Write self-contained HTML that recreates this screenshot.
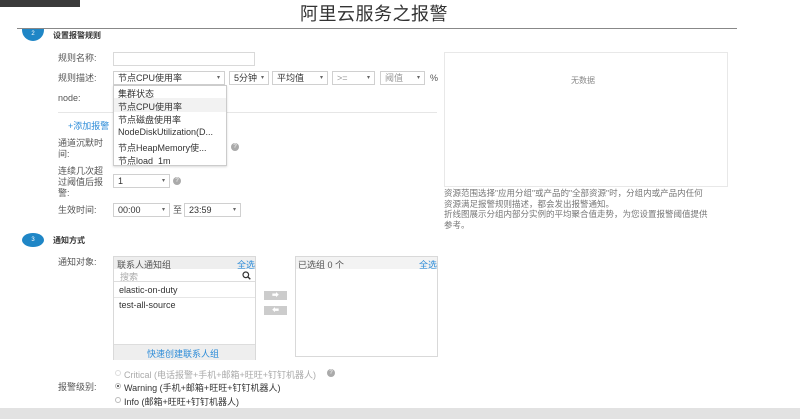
<!DOCTYPE html>
<html><head><meta charset="utf-8"><style>
*{margin:0;padding:0;box-sizing:border-box}
body{width:800px;height:419px;overflow:hidden;background:#fff;position:relative;font-family:"Liberation Sans","Noto Sans CJK SC",sans-serif;color:#333;font-size:9px}
.a{position:absolute;white-space:nowrap}
.box{position:absolute;border:1px solid #d9d9d9;background:#fff}
.lbl{position:absolute;color:#555;font-size:9px;line-height:11px}
.sel{position:absolute;border:1px solid #d0d0d0;background:#fff;height:14px;font-size:9px;line-height:12px;padding-left:4px;color:#333}
.sel:after{content:"▾";position:absolute;right:4px;top:0;font-size:6px;color:#666}
.q{position:absolute;width:8px;height:8px;border-radius:50%;background:#aaa;color:#fff;font-size:6px;line-height:8px;text-align:center}
.circ{position:absolute;width:22px;height:14px;border-radius:50%;background:#1f86c6;color:#fff;font-size:6px;text-align:center;line-height:14px}
.blue{color:#2d8cd8}
</style></head><body>
<div class="a" style="left:0;top:0;width:80px;height:7px;background:#3a3a3a"></div>
<div class="a" style="left:300px;top:0px;font-size:18px;color:#333;letter-spacing:0.5px">阿里云服务之报警</div>
<div class="a" style="left:17px;top:28px;width:720px;height:1px;background:#888"></div>
<div class="circ" style="left:22px;top:29px;border-radius:0 0 11px 11px;height:12px;line-height:10px">2</div>
<div class="a" style="left:53px;top:30px;font-size:8px;font-weight:bold;color:#333">设置报警规则</div>

<div class="lbl" style="left:58px;top:53px">规则名称:</div>
<div class="box" style="left:113px;top:52px;width:142px;height:14px"></div>
<div class="lbl" style="left:58px;top:73px">规则描述:</div>
<div class="sel" style="left:113px;top:71px;width:112px">节点CPU使用率</div>
<div class="sel" style="left:229px;top:71px;width:40px">5分钟</div>
<div class="sel" style="left:272px;top:71px;width:56px">平均值</div>
<div class="sel" style="left:332px;top:71px;width:43px;color:#999">&gt;=</div>
<div class="sel" style="left:380px;top:71px;width:45px;color:#999">阈值</div>
<div class="lbl" style="left:430px;top:73px">%</div>
<div class="lbl" style="left:58px;top:93px">node:</div>
<div class="a" style="left:58px;top:112px;width:379px;height:1px;background:#e6e6e6"></div>
<div class="a blue" style="left:68px;top:119px;font-size:9px">+添加报警</div>
<div class="lbl" style="left:58px;top:138px">通道沉默时<br>间:</div>
<div class="q" style="left:231px;top:143px">?</div>
<div class="lbl" style="left:58px;top:166px">连续几次超<br>过阈值后报<br>警:</div>
<div class="sel" style="left:113px;top:174px;width:57px">1</div>
<div class="q" style="left:173px;top:177px">?</div>
<div class="lbl" style="left:58px;top:205px">生效时间:</div>
<div class="sel" style="left:113px;top:203px;width:57px">00:00</div>
<div class="lbl" style="left:173px;top:205px">至</div>
<div class="sel" style="left:184px;top:203px;width:57px">23:59</div>

<div class="box" style="left:113px;top:85px;width:114px;height:81px;border-color:#ccc;box-shadow:0 1px 2px rgba(0,0,0,.15);overflow:hidden">
<div class="a" style="left:4px;top:1px">集群状态</div>
<div class="a" style="left:0;top:12px;width:112px;height:14px;background:#f2f2f2"></div>
<div class="a" style="left:4px;top:14px">节点CPU使用率</div>
<div class="a" style="left:4px;top:27px">节点磁盘使用率</div>
<div class="a" style="left:4px;top:41px">NodeDiskUtilization(D...</div>
<div class="a" style="left:4px;top:55px">节点HeapMemory使...</div>
<div class="a" style="left:4px;top:68px">节点load_1m</div>
</div>

<div class="box" style="left:444px;top:52px;width:284px;height:135px;border-color:#e8e8e8"></div>
<div class="a" style="left:571px;top:75px;color:#888;font-size:8px">无数据</div>
<div class="a" style="left:444px;top:188px;color:#777;font-size:8.5px;line-height:10.5px">资源范围选择"应用分组"或产品的"全部资源"时，分组内或产品内任何<br>资源满足报警规则描述，都会发出报警通知。<br>折线图展示分组内部分实例的平均聚合值走势，为您设置报警阈值提供<br>参考。</div>

<div class="circ" style="left:22px;top:233px">3</div>
<div class="a" style="left:53px;top:235px;font-size:8px;font-weight:bold">通知方式</div>
<div class="lbl" style="left:58px;top:257px">通知对象:</div>
<div class="box" style="left:113px;top:256px;width:143px;height:104px">
<div class="a" style="left:0;top:0;width:141px;height:12px;background:#eee"></div>
<div class="a" style="left:3px;top:1px;color:#555">联系人通知组</div>
<div class="a blue" style="left:123px;top:1px">全选</div>
<div class="a" style="left:0;top:12px;width:141px;height:13px;border-bottom:1px solid #ddd"></div>
<div class="a" style="left:6px;top:13px;color:#aaa">搜索</div>
<svg class="a" style="left:128px;top:14px" width="9" height="9" viewBox="0 0 9 9"><circle cx="3.8" cy="3.8" r="2.8" fill="none" stroke="#333" stroke-width="1.2"/><path d="M5.8 5.8L8.3 8.3" stroke="#333" stroke-width="1.4"/></svg>
<div class="a" style="left:5px;top:28px">elastic-on-duty</div>
<div class="a" style="left:0;top:40px;width:141px;height:1px;background:#e6e6e6"></div>
<div class="a" style="left:5px;top:43px">test-all-source</div>
<div class="a" style="left:0;top:87px;width:141px;height:16px;background:#eee;border-top:1px solid #ddd"></div>
<div class="a blue" style="left:33px;top:90px">快速创建联系人组</div>
</div>
<div class="a" style="left:264px;top:291px;width:23px;height:9px;background:#ccc;color:#fff;font-size:7px;text-align:center;line-height:9px">➡</div>
<div class="a" style="left:264px;top:306px;width:23px;height:9px;background:#ccc;color:#fff;font-size:7px;text-align:center;line-height:9px">⬅</div>
<div class="box" style="left:295px;top:256px;width:143px;height:101px">
<div class="a" style="left:0;top:0;width:141px;height:12px;background:#f3f3f3"></div>
<div class="a" style="left:2px;top:1px;color:#555">已选组 0 个</div>
<div class="a blue" style="left:123px;top:1px">全选</div>
</div>

<div class="a" style="left:115px;top:370px;width:6px;height:6px;border-radius:50%;border:1px solid #ddd"></div>
<div class="a" style="left:124px;top:368px;color:#aaa">Critical (电话报警+手机+邮箱+旺旺+钉钉机器人)</div>
<div class="q" style="left:327px;top:369px">?</div>
<div class="lbl" style="left:58px;top:382px">报警级别:</div>
<div class="a" style="left:115px;top:383px;width:6px;height:6px;border-radius:50%;border:1px solid #bbb;background:radial-gradient(#555 35%,#fff 40%)"></div>
<div class="a" style="left:124px;top:381px">Warning (手机+邮箱+旺旺+钉钉机器人)</div>
<div class="a" style="left:115px;top:397px;width:6px;height:6px;border-radius:50%;border:1px solid #bbb"></div>
<div class="a" style="left:124px;top:395px">Info (邮箱+旺旺+钉钉机器人)</div>
<div class="a" style="left:0;top:408px;width:800px;height:11px;background:#e2e2e2"></div>
</body></html>
